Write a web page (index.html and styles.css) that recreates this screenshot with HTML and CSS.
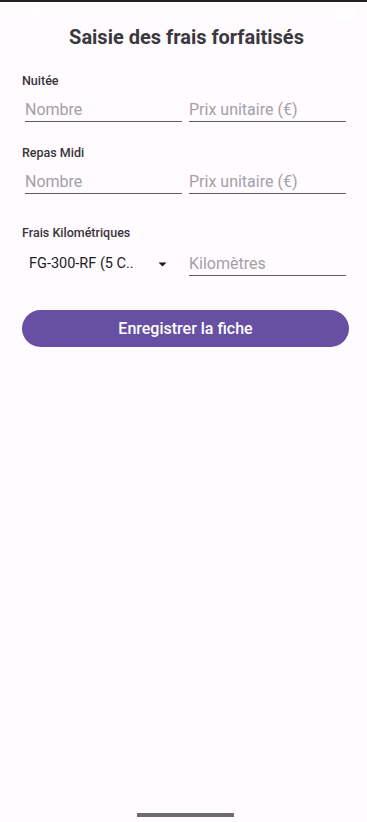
FILE: index.html
```html
<!DOCTYPE html>
<html lang="fr">
<head>
<meta charset="utf-8">
<meta name="viewport" content="width=device-width, initial-scale=1">
<title>Saisie des frais forfaitisés</title>
<link rel="stylesheet" href="styles.css">
</head>
<body>
<div class="topline"></div>
<div class="statusbar">
  <span class="time">12:24</span>
  <span class="status-right"><span class="battery"></span></span>
</div>
<main class="content">
  <h1 class="title">Saisie des frais forfaitisés</h1>

  <section class="group">
    <div class="label">Nuitée</div>
    <div class="row">
      <div class="field"><span class="ph">Nombre</span></div>
      <div class="field"><span class="ph">Prix unitaire (€)</span></div>
    </div>
  </section>

  <section class="group">
    <div class="label">Repas Midi</div>
    <div class="row">
      <div class="field"><span class="ph">Nombre</span></div>
      <div class="field"><span class="ph">Prix unitaire (€)</span></div>
    </div>
  </section>

  <section class="group group-km">
    <div class="label">Frais Kilométriques</div>
    <div class="row row-km">
      <div class="select">
        <span class="select-text">FG-300-RF (5 C..</span>
        <svg class="arrow" width="9" height="5" viewBox="0 0 9 5"><path d="M0.5 0.5 L8.5 0.5 L4.5 4.5 Z" fill="#1c1b1f"/></svg>
      </div>
      <div class="field"><span class="ph">Kilomètres</span></div>
    </div>
  </section>

  <button class="submit" type="button">Enregistrer la fiche</button>
</main>
<div class="home-indicator"></div>
</body>
</html>
```

FILE: styles.css
```css
* { box-sizing: border-box; }
html, body {
  margin: 0;
  padding: 0;
  background: #fffbfe;
  font-family: Roboto, "Noto Sans", "Liberation Sans", sans-serif;
}
body {
  width: 367px;
  height: 822px;
  position: relative;
  overflow: hidden;
}
.topline {
  height: 2px;
  background: #222222;
}
.statusbar {
  height: 23px;
  display: flex;
  justify-content: space-between;
  align-items: center;
  padding: 0 12px 0 8px;
  color: #ffffff;
  font-size: 13px;
}
.battery {
  display: inline-block;
  width: 20px;
  height: 9px;
  background: #ffffff;
  border-radius: 3px;
}
.content {
  padding: 0 18px 0 22px;
}
.title {
  margin: 0 0 0 2px;
  text-align: center;
  font-size: 20px;
  line-height: 24px;
  font-weight: 700;
  color: #3a3840;
}
.group {
  margin-top: 24px;
}
.group + .group {
  margin-top: 23px;
}
.group-km {
  margin-top: 31px !important;
}
.label {
  font-size: 12.5px;
  line-height: 16px;
  font-weight: 500;
  color: #38353d;
}
.row {
  display: flex;
  gap: 7px;
  margin: 9px 3px 0 3px;
}
.row-km {
  margin-top: 11px;
}
.field, .select {
  width: 157px;
  flex: none;
  height: 24px;
  line-height: 20px;
  padding-top: 2px;
  font-size: 16px;
}
.field {
  border-bottom: 1.3px solid #5f5c64;
}
.ph {
  color: #a4a0a8;
}
.select {
  display: flex;
  align-items: center;
  justify-content: space-between;
  padding: 0 15px 0 4px;
  font-size: 14.5px;
}
.select-text {
  color: #1c1b1f;
}
.arrow {
  display: block;
  margin-top: 1px;
}
.submit {
  display: block;
  width: 327px;
  height: 37px;
  margin-top: 34px;
  border: 0;
  border-radius: 19px;
  background: #6750a4;
  color: #ffffff;
  font-family: Roboto, "Noto Sans", "Liberation Sans", sans-serif;
  font-size: 16px;
  font-weight: 500;
  padding: 0;
}
.home-indicator {
  position: absolute;
  left: 137px;
  bottom: 5px;
  width: 97px;
  height: 4px;
  background: #6c6c6c;
}
```
